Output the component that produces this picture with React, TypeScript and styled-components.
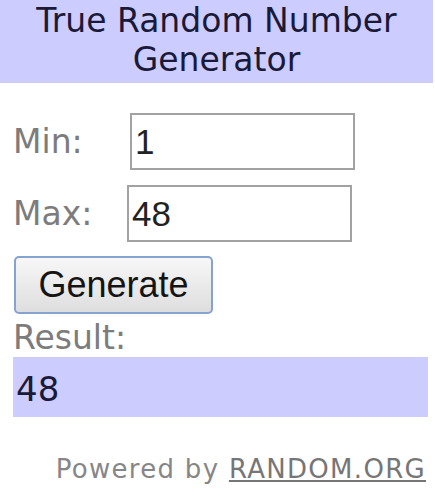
import React, { useState } from 'react';
import styled, { createGlobalStyle } from 'styled-components';

const GlobalStyle = createGlobalStyle`
  html, body {
    margin: 0;
    padding: 0;
    background: #ffffff;
  }
`;

const App: React.FC = () => {
  const [min, setMin] = useState('1');
  const [max, setMax] = useState('48');
  const [result, setResult] = useState('48');

  const handleGenerate = () => {
    const lo = parseInt(min, 10);
    const hi = parseInt(max, 10);
    if (isNaN(lo) || isNaN(hi) || hi < lo) return;
    setResult(String(lo + Math.floor(Math.random() * (hi - lo + 1))));
  };

  return (
    <>
      <GlobalStyle />
      <Widget>
        <Header>True Random Number Generator</Header>
        <Body>
          <FieldRow $top={30}>
            <Label $width={117}>Min:</Label>
            <NumberInput value={min} onChange={(e) => setMin(e.target.value)} />
          </FieldRow>
          <FieldRow $top={15}>
            <Label $width={114}>Max:</Label>
            <NumberInput value={max} onChange={(e) => setMax(e.target.value)} />
          </FieldRow>
          <GenerateButton onClick={handleGenerate}>Generate</GenerateButton>
          <ResultLabel>Result:</ResultLabel>
          <ResultBox>{result}</ResultBox>
        </Body>
        <Footer>
          Powered by <FooterLink>RANDOM.ORG</FooterLink>
        </Footer>
      </Widget>
    </>
  );
};

export default App;

const Widget = styled.div`
  width: 433px;
  font-family: 'DejaVu Sans', Verdana, sans-serif;
`;

const Header = styled.div`
  background-color: #ccccff;
  color: #1a1a38;
  font-size: 33px;
  line-height: 39px;
  text-align: center;
  padding: 1px 20px 4px;
`;

const Body = styled.div`
  display: flex;
  flex-direction: column;
  align-items: flex-start;
  padding: 0 5px 0 13px;
`;

const FieldRow = styled.div<{ $top: number }>`
  display: flex;
  align-items: center;
  margin-top: ${({ $top }) => $top}px;
`;

const Label = styled.span<{ $width: number }>`
  width: ${({ $width }) => $width}px;
  color: #7c7c7c;
  font-size: 33px;
`;

const NumberInput = styled.input`
  box-sizing: border-box;
  width: 225px;
  height: 57px;
  border: 2px solid #a2a2a2;
  padding: 0 3px;
  margin: 0;
  font-family: 'Liberation Sans', Arial, sans-serif;
  font-size: 35px;
  color: #222222;
  background: #ffffff;
  outline: none;
`;

const GenerateButton = styled.button`
  box-sizing: border-box;
  width: 199px;
  height: 58px;
  margin: 14px 0 0 1px;
  padding: 0;
  border: 2px solid #86a3d0;
  border-radius: 5px;
  background: linear-gradient(#f7f7f7, #dedede);
  font-family: 'Liberation Sans', Arial, sans-serif;
  font-size: 36px;
  color: #141414;
  cursor: pointer;
`;

const ResultLabel = styled.div`
  margin-top: 4px;
  color: #7c7c7c;
  font-size: 33px;
  line-height: 39px;
`;

const ResultBox = styled.div`
  box-sizing: border-box;
  align-self: stretch;
  height: 60px;
  padding: 13px 3px 0;
  background-color: #ccccff;
  color: #1a1a38;
  font-size: 34px;
  line-height: 38px;
`;

const Footer = styled.div`
  margin-top: 37px;
  padding-right: 7px;
  text-align: right;
  color: #868686;
  font-size: 26px;
  letter-spacing: 1.3px;
`;

const FooterLink = styled.span`
  color: #767676;
  text-decoration: underline;
`;
